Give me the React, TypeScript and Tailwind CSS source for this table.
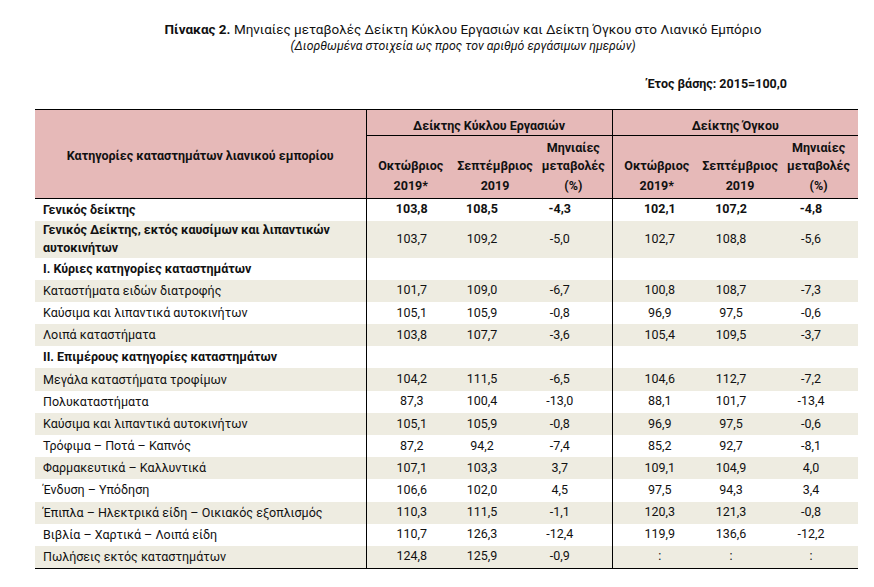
const GREY = "bg-[#eeece1]";

type Row = {
  label: string;
  vals: string[];
  bold?: boolean;
  labelBold?: boolean;
  section?: boolean;
  grey?: boolean;
  tall?: boolean;
};

const ROWS: Row[] = [
  { label: "Γενικός δείκτης", vals: ["103,8", "108,5", "-4,3", "102,1", "107,2", "-4,8"], bold: true },
  { label: "Γενικός Δείκτης, εκτός καυσίμων και λιπαντικών αυτοκινήτων", vals: ["103,7", "109,2", "-5,0", "102,7", "108,8", "-5,6"], labelBold: true, grey: true, tall: true },
  { label: "I. Κύριες κατηγορίες καταστημάτων", vals: [], section: true },
  { label: "Καταστήματα ειδών διατροφής", vals: ["101,7", "109,0", "-6,7", "100,8", "108,7", "-7,3"], grey: true },
  { label: "Καύσιμα και λιπαντικά αυτοκινήτων", vals: ["105,1", "105,9", "-0,8", "96,9", "97,5", "-0,6"] },
  { label: "Λοιπά καταστήματα", vals: ["103,8", "107,7", "-3,6", "105,4", "109,5", "-3,7"], grey: true },
  { label: "II. Επιμέρους κατηγορίες καταστημάτων", vals: [], section: true },
  { label: "Μεγάλα καταστήματα τροφίμων", vals: ["104,2", "111,5", "-6,5", "104,6", "112,7", "-7,2"], grey: true },
  { label: "Πολυκαταστήματα", vals: ["87,3", "100,4", "-13,0", "88,1", "101,7", "-13,4"] },
  { label: "Καύσιμα και λιπαντικά αυτοκινήτων", vals: ["105,1", "105,9", "-0,8", "96,9", "97,5", "-0,6"], grey: true },
  { label: "Τρόφιμα – Ποτά – Καπνός", vals: ["87,2", "94,2", "-7,4", "85,2", "92,7", "-8,1"] },
  { label: "Φαρμακευτικά – Καλλυντικά", vals: ["107,1", "103,3", "3,7", "109,1", "104,9", "4,0"], grey: true },
  { label: "Ένδυση – Υπόδηση", vals: ["106,6", "102,0", "4,5", "97,5", "94,3", "3,4"] },
  { label: "Έπιπλα – Ηλεκτρικά είδη – Οικιακός εξοπλισμός", vals: ["110,3", "111,5", "-1,1", "120,3", "121,3", "-0,8"], grey: true },
  { label: "Βιβλία – Χαρτικά – Λοιπά είδη", vals: ["110,7", "126,3", "-12,4", "119,9", "136,6", "-12,2"] },
  { label: "Πωλήσεις εκτός καταστημάτων", vals: ["124,8", "125,9", "-0,9", ":", ":", ":"], grey: true },
];

// per-column nudges so the numbers sit where Excel put them
const NUM_PAD = ["pl-[2px]", "pr-[26px]", "pr-[27px]", "pl-[6px]", "pr-[18px]", "pr-[15px]"];
const DIVIDER = ["border-l border-black", "", "", "border-l border-black", "", ""];

export default function App() {
  const th = "font-bold text-center align-bottom p-0";

  return (
    <div className="w-[874px] h-[587px] bg-white text-[#111] font-['Roboto','Noto_Sans',sans-serif]">
      {/* Title */}
      <div className="pl-[52px] pt-[21px] text-center">
        <p className="text-[13.5px] leading-[17px]">
          <span className="font-bold">Πίνακας 2.</span> Μηνιαίες μεταβολές Δείκτη Κύκλου Εργασιών και Δείκτη Όγκου στο Λιανικό Εμπόριο
        </p>
        <p className="text-[12.3px] italic leading-[17px]">(Διορθωμένα στοιχεία ως προς τον αριθμό εργάσιμων ημερών)</p>
      </div>
      <div className="mt-[20px] w-[787px] text-right text-[12.5px] font-bold leading-[18px]">Έτος βάσης: 2015=100,0</div>

      {/* Table */}
      <table className="ml-[35px] mt-[16px] w-[823px] table-fixed border-collapse text-[12.5px]">
        <colgroup>
          <col className="w-[331px]" />
          <col className="w-[89px]" />
          <col className="w-[80px]" />
          <col className="w-[77px]" />
          <col className="w-[89px]" />
          <col className="w-[78px]" />
          <col className="w-[79px]" />
        </colgroup>
        <thead className="bg-[#e6b9b8]">
          <tr className="border-t border-black">
            <th rowSpan={3} className="p-0 pt-[4px] align-middle text-center font-bold">Κατηγορίες καταστημάτων λιανικού εμπορίου</th>
            <th colSpan={3} className="h-[26px] border-b border-l border-black p-0 text-center align-bottom font-bold leading-[18px]">Δείκτης Κύκλου Εργασιών</th>
            <th colSpan={3} className="border-b border-l border-black p-0 text-center align-bottom font-bold leading-[18px]">Δείκτης Όγκου</th>
          </tr>
          <tr className="leading-[18px]">
            <th className={`${th} h-[40px] border-l border-black pb-[1px]`}>Οκτώβριος</th>
            <th className={`${th} pb-[1px]`}>Σεπτέμβριος</th>
            <th className={`${th} pb-[1px]`}>Μηνιαίες<br />μεταβολές</th>
            <th className={`${th} border-l border-black pb-[1px]`}>Οκτώβριος</th>
            <th className={`${th} pb-[1px]`}>Σεπτέμβριος</th>
            <th className={`${th} pb-[1px]`}>Μηνιαίες<br />μεταβολές</th>
          </tr>
          <tr className="border-b border-black">
            <th className="h-[23px] border-l border-black p-0 text-center align-middle font-bold">2019*</th>
            <th className="p-0 text-center align-middle font-bold">2019</th>
            <th className="p-0 text-center align-middle font-bold">(%)</th>
            <th className="border-l border-black p-0 text-center align-middle font-bold">2019*</th>
            <th className="p-0 text-center align-middle font-bold">2019</th>
            <th className="p-0 text-center align-middle font-bold">(%)</th>
          </tr>
        </thead>
        <tbody className="border-b border-black">
          {ROWS.map((r, i) => (
            <tr key={i} className={r.grey ? GREY : "bg-white"}>
              <td
                className={`${i === 0 ? "h-[22px]" : r.tall ? "h-[37px]" : "h-[22.2px]"} py-0 pl-[8px] pr-[4px] align-middle leading-[18px] ${r.bold || r.labelBold || r.section ? "font-bold" : ""}`}
              >
                {r.label}
              </td>
              {[0, 1, 2, 3, 4, 5].map((c) => (
                <td key={c} className={`py-0 text-center align-middle ${DIVIDER[c]} ${NUM_PAD[c]} ${r.bold ? "font-bold" : ""}`}>
                  {r.vals[c] ?? ""}
                </td>
              ))}
            </tr>
          ))}
        </tbody>
      </table>
    </div>
  );
}
